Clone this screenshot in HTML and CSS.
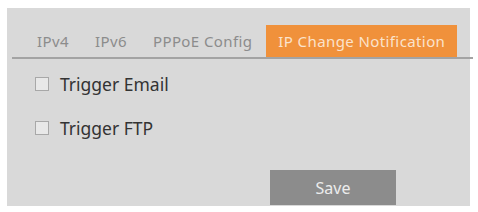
FILE: index.html
```html
<!DOCTYPE html>
<html lang="en">
<head>
  <meta charset="UTF-8" />
  <title>IP Change Notification</title>
  <link rel="stylesheet" href="styles.css">
</head>
<body>
  <div class="panel">
    <ul class="tabs">
      <li>IPv4</li>
      <li>IPv6</li>
      <li>PPPoE Config</li>
      <li class="active">IP Change Notification</li>
    </ul>

    <div class="options">
      <label class="option"><span class="box"></span>Trigger Email</label>
      <label class="option"><span class="box"></span>Trigger FTP</label>
    </div>

    <div class="actions">
      <button class="save-btn">Save</button>
    </div>
  </div>
</body>
</html>
```

FILE: styles.css
```css
body {
  margin: 0;
  background: #fff;
  font-family: 'Noto Sans', 'Open Sans', sans-serif;
}

.panel {
  margin: 8px 0 0 7px;
  width: 463px;
  height: 198px;
  background: #d9d9d9;
  padding-left: 5px;
  box-sizing: border-box;
  display: flex;
  flex-direction: column;
}

.tabs {
  list-style: none;
  margin: 17px -3px 0 0;
  padding: 0 0 0 13px;
  display: flex;
  gap: 2px;
  border-bottom: 2px solid #a3a3a3;
}

.tabs li {
  height: 32px;
  line-height: 32px;
  padding: 0 12px;
  font-size: 15px;
  letter-spacing: 0.4px;
  color: #8c8c8c;
}

.tabs li.active {
  background: #f0913b;
  color: #fbe3cc;
}

.options {
  padding: 14px 0 0 23px;
  display: flex;
  flex-direction: column;
  gap: 22px;
}

.option {
  display: flex;
  align-items: center;
  gap: 11px;
  height: 22px;
  font-size: 17.5px;
  color: #333;
}

.box {
  width: 12px;
  height: 12px;
  border: 1px solid #a8a8a8;
  background: #e8e8e8;
}

.actions {
  margin-top: auto;
  padding-left: 258px;
}

.save-btn {
  width: 126px;
  height: 35px;
  background: #8c8c8c;
  color: #ececec;
  border: none;
  font-family: inherit;
  font-size: 16px;
  margin-bottom: 1px;
}
```
